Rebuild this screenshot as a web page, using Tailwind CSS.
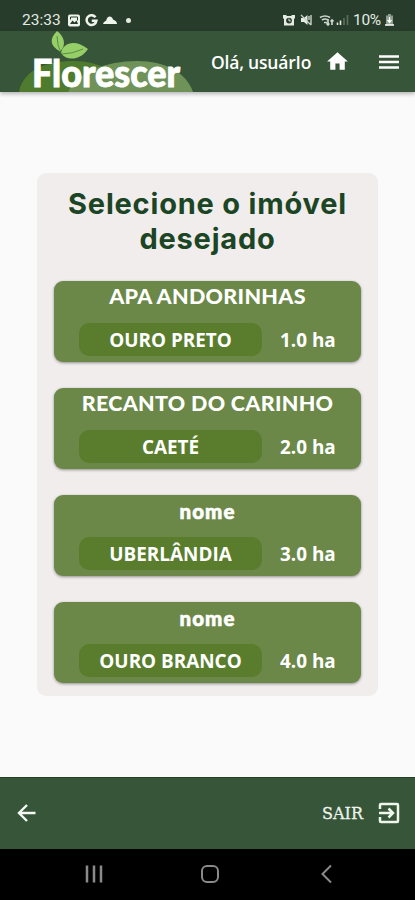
<!DOCTYPE html>
<html lang="pt-BR">
<head>
<meta charset="utf-8">
<meta name="viewport" content="width=device-width, initial-scale=1">
<title>Florescer</title>
<script src="https://cdn.jsdelivr.net/npm/@tailwindcss/browser@4"></script>
</head>
<body class="bg-[#fafafa]">
<div class="flex h-[900px] w-[415px] flex-col overflow-hidden bg-[#fafafa] font-['Open_Sans',sans-serif] text-white">
  <!-- Status bar -->
  <div class="flex h-[31px] shrink-0 items-center bg-[#273c2a] pt-[9px] pl-[22px] pr-[21px] font-[Roboto,sans-serif] text-[15px] leading-[22px] text-[#e4ebe3]">
    <span class="w-[46px] whitespace-nowrap text-[15.5px]">23:33</span>
    <svg class="h-[13px] w-3 shrink-0" viewBox="0 0 12 12"><rect width="12" height="12" rx="2" fill="#eef3ec"/><path d="M2 9.5 4.5 6l2 2 2-2 1.500 3.500z" fill="#273c2a"/><path d="M2.500 5V2.500h7V6" fill="none" stroke="#273c2a"/></svg>
    <svg class="ml-[5px] h-[13px] w-[13px] shrink-0" viewBox="0 0 13 13"><path d="M10.5 3.2A4.9 4.9 0 1 0 11.4 6.8H6.8" fill="none" stroke="#eef3ec" stroke-width="2.5"/></svg>
    <svg class="ml-[5px] h-[10px] w-[14px] shrink-0" viewBox="0 0 14 10"><path d="M0 9q0-2 3.200-3.500C4 1 8.500 0 10 4.500 13 5.500 14 7.500 14 9z" fill="#eef3ec"/></svg>
    <i class="ml-[9px] h-[5px] w-[5px] shrink-0 rounded-full bg-[#e4ebe3]"></i>
    <svg class="ml-auto h-3 w-3 shrink-0" viewBox="0 0 12 12"><path d="M0 1h3l1 1h4l1-1h3v3l-1 1v6.500H1V5L0 4z" fill="#e4ebe3"/><circle cx="6" cy="6.600" r="2.900" fill="#273c2a"/><path d="M6 4.600v2.300h1.800" fill="none" stroke="#e4ebe3"/></svg>
    <svg class="ml-[5px] h-3 w-3 shrink-0" viewBox="0 0 12 12"><path d="M1 4h3l3.500-3v10L4 8H1z" fill="#e4ebe3"/><path d="m1 1 10 10M9 2v4M11 1v10" stroke="#c9d3c8" stroke-width="1.400"/></svg>
    <svg class="ml-[7px] h-3 w-[15px] shrink-0" viewBox="0 0 15 12"><path d="M1 3.500q5-3 10 0M3 6q3-2 6 0M5 8.500h3M9 5v6m-1.500-1.500L9 11l1.500-1.500M13 11V6m-1.500 1.500L13 6l1.500 1.500" fill="none" stroke="#cbd5ca" stroke-width="1.700"/></svg>
    <svg class="ml-[2px] h-3 w-[13px] shrink-0" viewBox="0 0 13 12"><path d="M1.500 11V8.500M4.500 11V6.500" stroke="#e4ebe3" stroke-width="1.600"/><path d="M8 11V4M11.500 11V1" stroke="#5d705f" stroke-width="1.600"/></svg>
    <span class="ml-[4px] w-[32px] whitespace-nowrap text-[15.500px] tracking-[-0.300px]">10%</span>
    <svg class="h-3 w-[9px] shrink-0" viewBox="0 0 9 12"><path d="M3 0h3v1.500h2V11H1V1.500h2z" fill="#8c9d8e"/><path d="M4.500 3v4M2.500 6l2 2.500 2-2.500M0 11h9" fill="none" stroke="#fff" stroke-width="1.300"/></svg>
  </div>

  <!-- App header -->
  <header class="relative z-10 flex h-[61px] shrink-0 items-center bg-[#375539] pr-[14px] shadow-[0_2px_4px_rgba(0,0,0,0.28)]">
    <svg class="h-[61px] w-[195px] shrink-0 overflow-visible" viewBox="0 31 195 61">
      <path d="M19 92c4-22 27-31 55-31 25 0 45 11 51 31z" fill="#4f7b2e"/>
      <path d="M68 92c10-20 38-31 69-31 28 0 49 11 56 31z" fill="#6f9259"/>
      <path d="M60 51.500C50 46 49 39 57 31c7 5 10 14 3 20.500z" fill="#96cf68"/>
      <path d="M61 53c2-11 15-14 27-4-8 12-22 12-27 4z" fill="#96cf68"/>
      <path d="M57 36q0 9 4 17M62 54q10 0 21-5" fill="none" stroke="#497b3e" stroke-width=".8"/>
      <text x="32" y="86.500" textLength="148" lengthAdjust="spacingAndGlyphs" fill="#fff" stroke="#fff" stroke-width=".9" font-family="Lato, sans-serif" font-weight="900" font-size="37">Florescer</text>
    </svg>
    <span class="ml-4 w-[102px] whitespace-nowrap text-[17.500px] font-semibold leading-6 tracking-[-0.200px]">Olá, usuárIo</span>
    <svg class="ml-[12px] h-[25px] w-[25px] shrink-0" viewBox="0 0 24 24"><path d="M10 20v-6h4v6h5v-8h3L12 3 2 12h3v8z" fill="#fff"/></svg>
    <svg class="ml-auto h-6 w-6 shrink-0" viewBox="0 0 24 24"><path d="M2 6.500h20M2 12h20M2 17.500h20" stroke="#fff" stroke-width="2.500"/></svg>
  </header>

  <main class="flex h-[685px] shrink-0 flex-col items-center pt-[81px]">
    <section class="flex h-[523px] w-[341px] flex-col items-center rounded-[9px] bg-[#f0edec] pt-[13px]">
      <h1 class="h-[95px] text-center font-[Inter,sans-serif] text-[29px] font-bold leading-[35px] tracking-[0.800px] text-[#1c4525]"><span class="whitespace-nowrap">Selecione o imóvel</span><br>desejado</h1>
      <div class="flex flex-col gap-[26px]">
        <article class="flex h-[81px] w-[307px] flex-col rounded-[9px] bg-[#6b8849] shadow-[0_1px_3px_rgba(0,0,0,0.4)]">
          <h2 class="h-[42px] whitespace-nowrap text-center font-[Lato,sans-serif] text-[21.5px] font-black leading-[31px] tracking-[0.3px]">APA ANDORINHAS</h2>
          <div class="flex items-start pl-[25px]"><span class="h-[33px] w-[183px] rounded-[10px] bg-[#597d2d] text-center text-[18.9px] font-bold leading-[34px]">OURO PRETO</span><span class="ml-[18px] whitespace-nowrap text-[18.9px] font-bold leading-[34px]">1.0 ha</span></div>
        </article>
        <article class="flex h-[81px] w-[307px] flex-col rounded-[9px] bg-[#6b8849] shadow-[0_1px_3px_rgba(0,0,0,0.4)]">
          <h2 class="h-[42px] whitespace-nowrap text-center font-[Lato,sans-serif] text-[21.5px] font-black leading-[31px] tracking-[0.3px]">RECANTO DO CARINHO</h2>
          <div class="flex items-start pl-[25px]"><span class="h-[33px] w-[183px] rounded-[10px] bg-[#597d2d] text-center text-[18.9px] font-bold leading-[34px]">CAETÉ</span><span class="ml-[18px] whitespace-nowrap text-[18.9px] font-bold leading-[34px]">2.0 ha</span></div>
        </article>
        <article class="flex h-[81px] w-[307px] flex-col rounded-[9px] bg-[#6b8849] shadow-[0_1px_3px_rgba(0,0,0,0.4)]">
          <h2 class="h-[42px] text-center font-[Lato,sans-serif] text-[20.5px] font-black leading-[33px] tracking-[1.1px] [-webkit-text-stroke:0.6px_white]">nome</h2>
          <div class="flex items-start pl-[25px]"><span class="h-[33px] w-[183px] rounded-[10px] bg-[#597d2d] text-center text-[18.9px] font-bold leading-[34px]">UBERLÂNDIA</span><span class="ml-[18px] whitespace-nowrap text-[18.9px] font-bold leading-[34px]">3.0 ha</span></div>
        </article>
        <article class="flex h-[81px] w-[307px] flex-col rounded-[9px] bg-[#6b8849] shadow-[0_1px_3px_rgba(0,0,0,0.4)]">
          <h2 class="h-[42px] text-center font-[Lato,sans-serif] text-[20.5px] font-black leading-[33px] tracking-[1.1px] [-webkit-text-stroke:0.6px_white]">nome</h2>
          <div class="flex items-start pl-[25px]"><span class="h-[33px] w-[183px] rounded-[10px] bg-[#597d2d] text-center text-[18.9px] font-bold leading-[34px]">OURO BRANCO</span><span class="ml-[18px] whitespace-nowrap text-[18.9px] font-bold leading-[34px]">4.0 ha</span></div>
        </article>
      </div>
    </section>
  </main>

  <footer class="flex h-[72px] shrink-0 items-center border-t border-[#1f4023] bg-[#375539] pb-[2px] pl-[15px] pr-[14px]">
    <svg class="h-6 w-6" viewBox="0 0 24 24"><path d="M20.500 12H4M12 4l-8 8 8 8" fill="none" stroke="#f4faf2" stroke-width="2.400"/></svg>
    <svg class="ml-auto h-6 w-[42px] overflow-visible" viewBox="0 0 42 24"><text x="0" y="18" textLength="41" lengthAdjust="spacingAndGlyphs" font-family="DejaVu Serif, serif" font-size="17.500" fill="#edf4eb" stroke="#edf4eb" stroke-width=".3">SAIR</text></svg>
    <svg class="ml-[13px] h-6 w-6" viewBox="0 0 24 24"><path d="M3 8V4a1 1 0 0 1 1-1h16a1 1 0 0 1 1 1v16a1 1 0 0 1-1 1H4a1 1 0 0 1-1-1v-4M2 12h14M11.500 7.500 16 12l-4.500 4.500" fill="none" stroke="#edf7eb" stroke-width="2.500"/></svg>
  </footer>

  <nav class="flex h-[51px] shrink-0 items-center justify-between bg-black pb-[2px] pl-[84px] pr-[79px]">
    <svg class="h-5 w-5" viewBox="0 0 20 20"><path d="M3 1.500v17M10 1.500v17M17 1.500v17" stroke="#8a8a8a" stroke-width="2.500"/></svg>
    <svg class="h-5 w-5" viewBox="0 0 20 20"><rect x="2" y="2" width="16" height="16" rx="5" fill="none" stroke="#8a8a8a" stroke-width="2"/></svg>
    <svg class="h-5 w-5" viewBox="0 0 20 20"><path d="M15 1.500 6.500 10l8.500 8.500" fill="none" stroke="#8a8a8a" stroke-width="2"/></svg>
  </nav>
</div>
</body>
</html>
